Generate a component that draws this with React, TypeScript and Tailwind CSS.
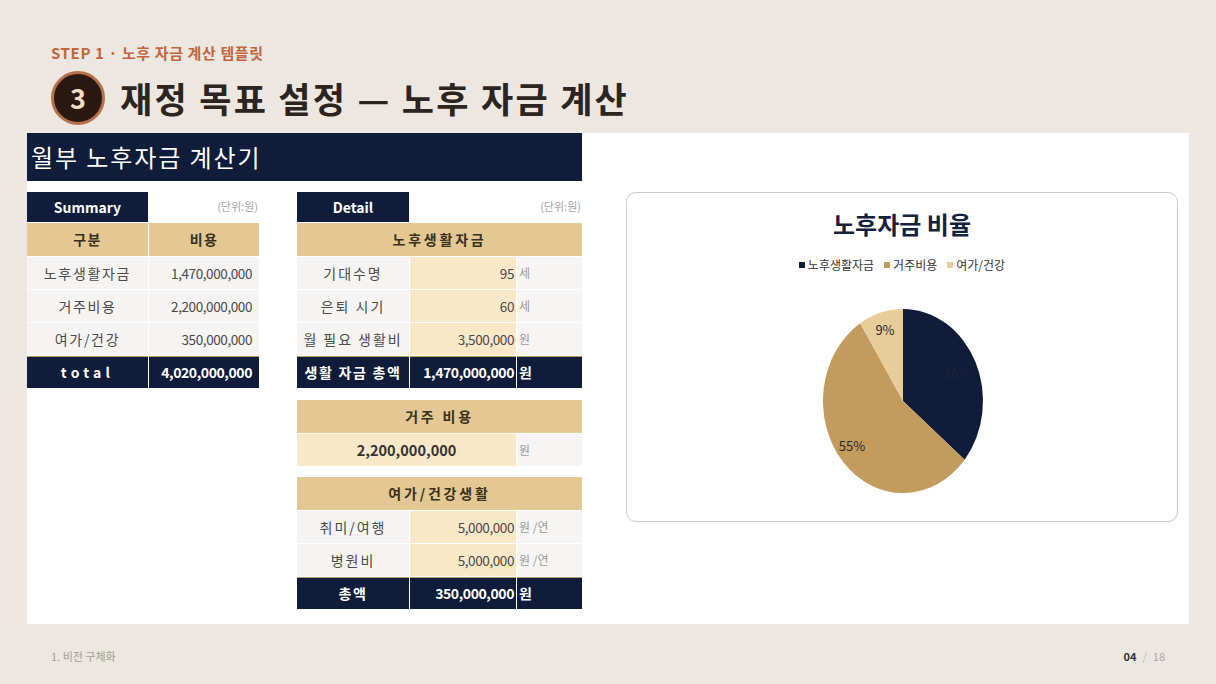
import React from 'react'

const kr = { fontFamily: '"Noto Sans CJK KR", "Noto Sans", sans-serif' }

function Pie() {
  const cx = 276
  const cy = 208
  const rx = 80
  const ry = 92
  const pt = (f: number) => {
    const t = f * Math.PI * 2
    return [cx + rx * Math.sin(t), cy - ry * Math.cos(t)]
  }
  const slice = (a: number, b: number, color: string) => {
    const [x1, y1] = pt(a)
    const [x2, y2] = pt(b)
    const large = b - a > 0.5 ? 1 : 0
    return <path d={`M${cx} ${cy} L${x1} ${y1} A${rx} ${ry} 0 ${large} 1 ${x2} ${y2} Z`} fill={color} />
  }
  return (
    <svg width="552" height="330" className="absolute left-0 top-0">
      {slice(0, 0.36, '#0f1c3a')}
      {slice(0.36, 0.91, '#c29b5d')}
      {slice(0.91, 1, '#e6cd99')}
      <text x="330" y="185" fontSize="13" fill="#1e2436" textAnchor="middle" style={kr}>36%</text>
      <text x="225" y="258" fontSize="13" fill="#2a2a2a" textAnchor="middle" style={kr}>55%</text>
      <text x="258" y="142" fontSize="13" fill="#2a2a2a" textAnchor="middle" style={kr}>9%</text>
    </svg>
  )
}

function Cell({ className = '', children }: { className?: string; children?: React.ReactNode }) {
  return <div className={`h-[32px] flex items-center ${className}`}>{children}</div>
}

function Summary() {
  const rows = [
    ['노후생활자금', '1,470,000,000'],
    ['거주비용', '2,200,000,000'],
    ['여가/건강', '350,000,000'],
  ]
  return (
    <div className="w-[232px]">
      <div className="flex h-[30px]">
        <div className="w-[121px] bg-[#0f1c3a] text-white text-[14px] font-bold flex items-center justify-center">Summary</div>
        <div className="flex-1 text-right text-[11px] text-[#a3a3a3] pt-[6px] pr-[1px]">(단위:원)</div>
      </div>
      <div className="grid grid-cols-[121px_110px] gap-px mt-px bg-white">
        <Cell className="!h-[33px] bg-[#e3c893] justify-center text-[14px] font-bold text-[#3a3020] tracking-[0.1em]">구분</Cell>
        <Cell className="!h-[33px] bg-[#e3c893] justify-center text-[14px] font-bold text-[#3a3020] tracking-[0.1em]">비용</Cell>
        {rows.map(([a, b]) => (
          <React.Fragment key={a}>
            <Cell className="bg-[#f5f4f2] justify-center text-[14px] text-[#4a4a4a] tracking-[0.12em]">{a}</Cell>
            <Cell className="bg-[#f5f4f2] justify-end pr-[7px] text-[13.5px] text-[#4a4a4a] tracking-[-0.03em]">{b}</Cell>
          </React.Fragment>
        ))}
        <Cell className="bg-[#0f1c3a] justify-center text-[14px] font-bold text-white tracking-[0.3em] border-t border-[#b89a62]">total</Cell>
        <Cell className="bg-[#0f1c3a] justify-end pr-[7px] text-[14px] font-bold text-white tracking-[-0.03em] border-t border-[#b89a62]">4,020,000,000</Cell>
      </div>
    </div>
  )
}

function Header({ children }: { children: React.ReactNode }) {
  return <Cell className="!h-[33px] col-span-3 bg-[#e3c893] justify-center text-[14px] font-bold text-[#3a3020] tracking-[0.2em]">{children}</Cell>
}

function Row({ label, value, unit }: { label: string; value: string; unit: string }) {
  return (
    <>
      <Cell className="bg-[#f5f4f2] justify-center text-[14px] text-[#4a4a4a] tracking-[0.14em]">{label}</Cell>
      <Cell className="bg-[#f8e8c7] justify-end pr-[2px] text-[13.5px] text-[#4a4a4a] tracking-[-0.03em]">{value}</Cell>
      <Cell className="bg-[#f6f5f3] pl-[2px] text-[12px] text-[#9a9a9a]">{unit}</Cell>
    </>
  )
}

function Total({ label, value }: { label: string; value: string }) {
  return (
    <>
      <Cell className="bg-[#0f1c3a] justify-center text-[14px] font-bold text-white tracking-[0.12em] border-t border-[#b89a62]">{label}</Cell>
      <Cell className="bg-[#0f1c3a] justify-end pr-[2px] text-[14px] font-bold text-white tracking-[-0.03em] border-t border-[#b89a62]">{value}</Cell>
      <Cell className="bg-[#0f1c3a] pl-[2px] text-[14px] font-bold text-white border-t border-[#b89a62]">원</Cell>
    </>
  )
}

function Detail() {
  const grid = 'grid grid-cols-[112px_106px_65px] gap-px bg-white'
  return (
    <div className="w-[285px]">
      <div className="flex h-[30px]">
        <div className="w-[112px] bg-[#0f1c3a] text-white text-[14px] font-bold flex items-center justify-center">Detail</div>
        <div className="flex-1 text-right text-[11px] text-[#a3a3a3] pt-[6px] pr-[1px]">(단위:원)</div>
      </div>
      <div className={`${grid} mt-px`}>
        <Header>노후생활자금</Header>
        <Row label="기대수명" value="95" unit="세" />
        <Row label="은퇴 시기" value="60" unit="세" />
        <Row label="월 필요 생활비" value="3,500,000" unit="원" />
        <Total label="생활 자금 총액" value="1,470,000,000" />
      </div>
      <div className={`${grid} mt-[12px]`}>
        <Header>거주 비용</Header>
        <Cell className="col-span-2 bg-[#f8e8c7] justify-center text-[14.5px] font-bold text-[#333]">2,200,000,000</Cell>
        <Cell className="bg-[#f6f5f3] pl-[2px] text-[12px] text-[#9a9a9a]">원</Cell>
      </div>
      <div className={`${grid} mt-[11px]`}>
        <Header>여가/건강생활</Header>
        <Row label="취미/여행" value="5,000,000" unit="원 /연" />
        <Row label="병원비" value="5,000,000" unit="원 /연" />
        <Total label="총액" value="350,000,000" />
      </div>
    </div>
  )
}

function Chart() {
  const legend = [
    ['노후생활자금', 'bg-[#0f1c3a]'],
    ['거주비용', 'bg-[#c29b5d]'],
    ['여가/건강', 'bg-[#e6cd99]'],
  ]
  return (
    <div className="relative w-[552px] h-[330px] rounded-[10px] border border-[#c9c9c9] bg-white">
      <Pie />
      <div className="relative flex flex-col items-center pt-[13px]">
        <div className="text-[24px] font-bold text-[#14213d] leading-[36px]">노후자금 비율</div>
        <div className="flex gap-[10px] mt-[15px] text-[12px] text-[#333] leading-[16px]">
          {legend.map(([t, c]) => (
            <div key={t} className="flex items-center gap-[3px]">
              <span className={`w-[6px] h-[6px] ${c}`} />
              {t}
            </div>
          ))}
        </div>
      </div>
    </div>
  )
}

export default function App() {
  return (
    <div className="w-[1216px] h-[684px] bg-[#ece7e0] px-[27px] overflow-hidden" style={kr}>
      <div className="pt-[44px] pl-[24px] text-[15px] leading-[18px] font-bold text-[#c0653c] tracking-[0.04em]">STEP 1 · 노후 자금 계산 템플릿</div>
      <div className="flex items-center mt-[9px] pl-[24px] h-[54px] gap-[15px]">
        <div className="w-[54px] h-[54px] rounded-full bg-[#2a1913] border-[3px] border-[#b8704a] flex items-center justify-center text-[27px] font-bold text-[#f1dcc4]">3</div>
        <div className="text-[35px] font-bold text-[#2b2421] tracking-[0.065em]">재정 목표 설정 — 노후 자금 계산</div>
      </div>
      <div className="mt-[8px] h-[491px] bg-white flex">
        <div className="w-[555px]">
          <div className="h-[48px] bg-[#0f1c3a] text-white text-[24px] flex items-center pl-[4px] tracking-[0.08em]">월부 노후자금 계산기</div>
          <div className="flex gap-[38px] mt-[11px]">
            <Summary />
            <Detail />
          </div>
        </div>
        <div className="ml-[44px] mt-[59px]">
          <Chart />
        </div>
      </div>
      <div className="flex justify-between items-center mt-[24px] px-[24px] text-[11px]">
        <span className="text-[#a39d95]">1. 비전 구체화</span>
        <span>
          <span className="font-bold text-[#333]">04</span>
          <span className="text-[#bbb] mx-[6px]">/</span>
          <span className="text-[#aaa]">18</span>
        </span>
      </div>
    </div>
  )
}
